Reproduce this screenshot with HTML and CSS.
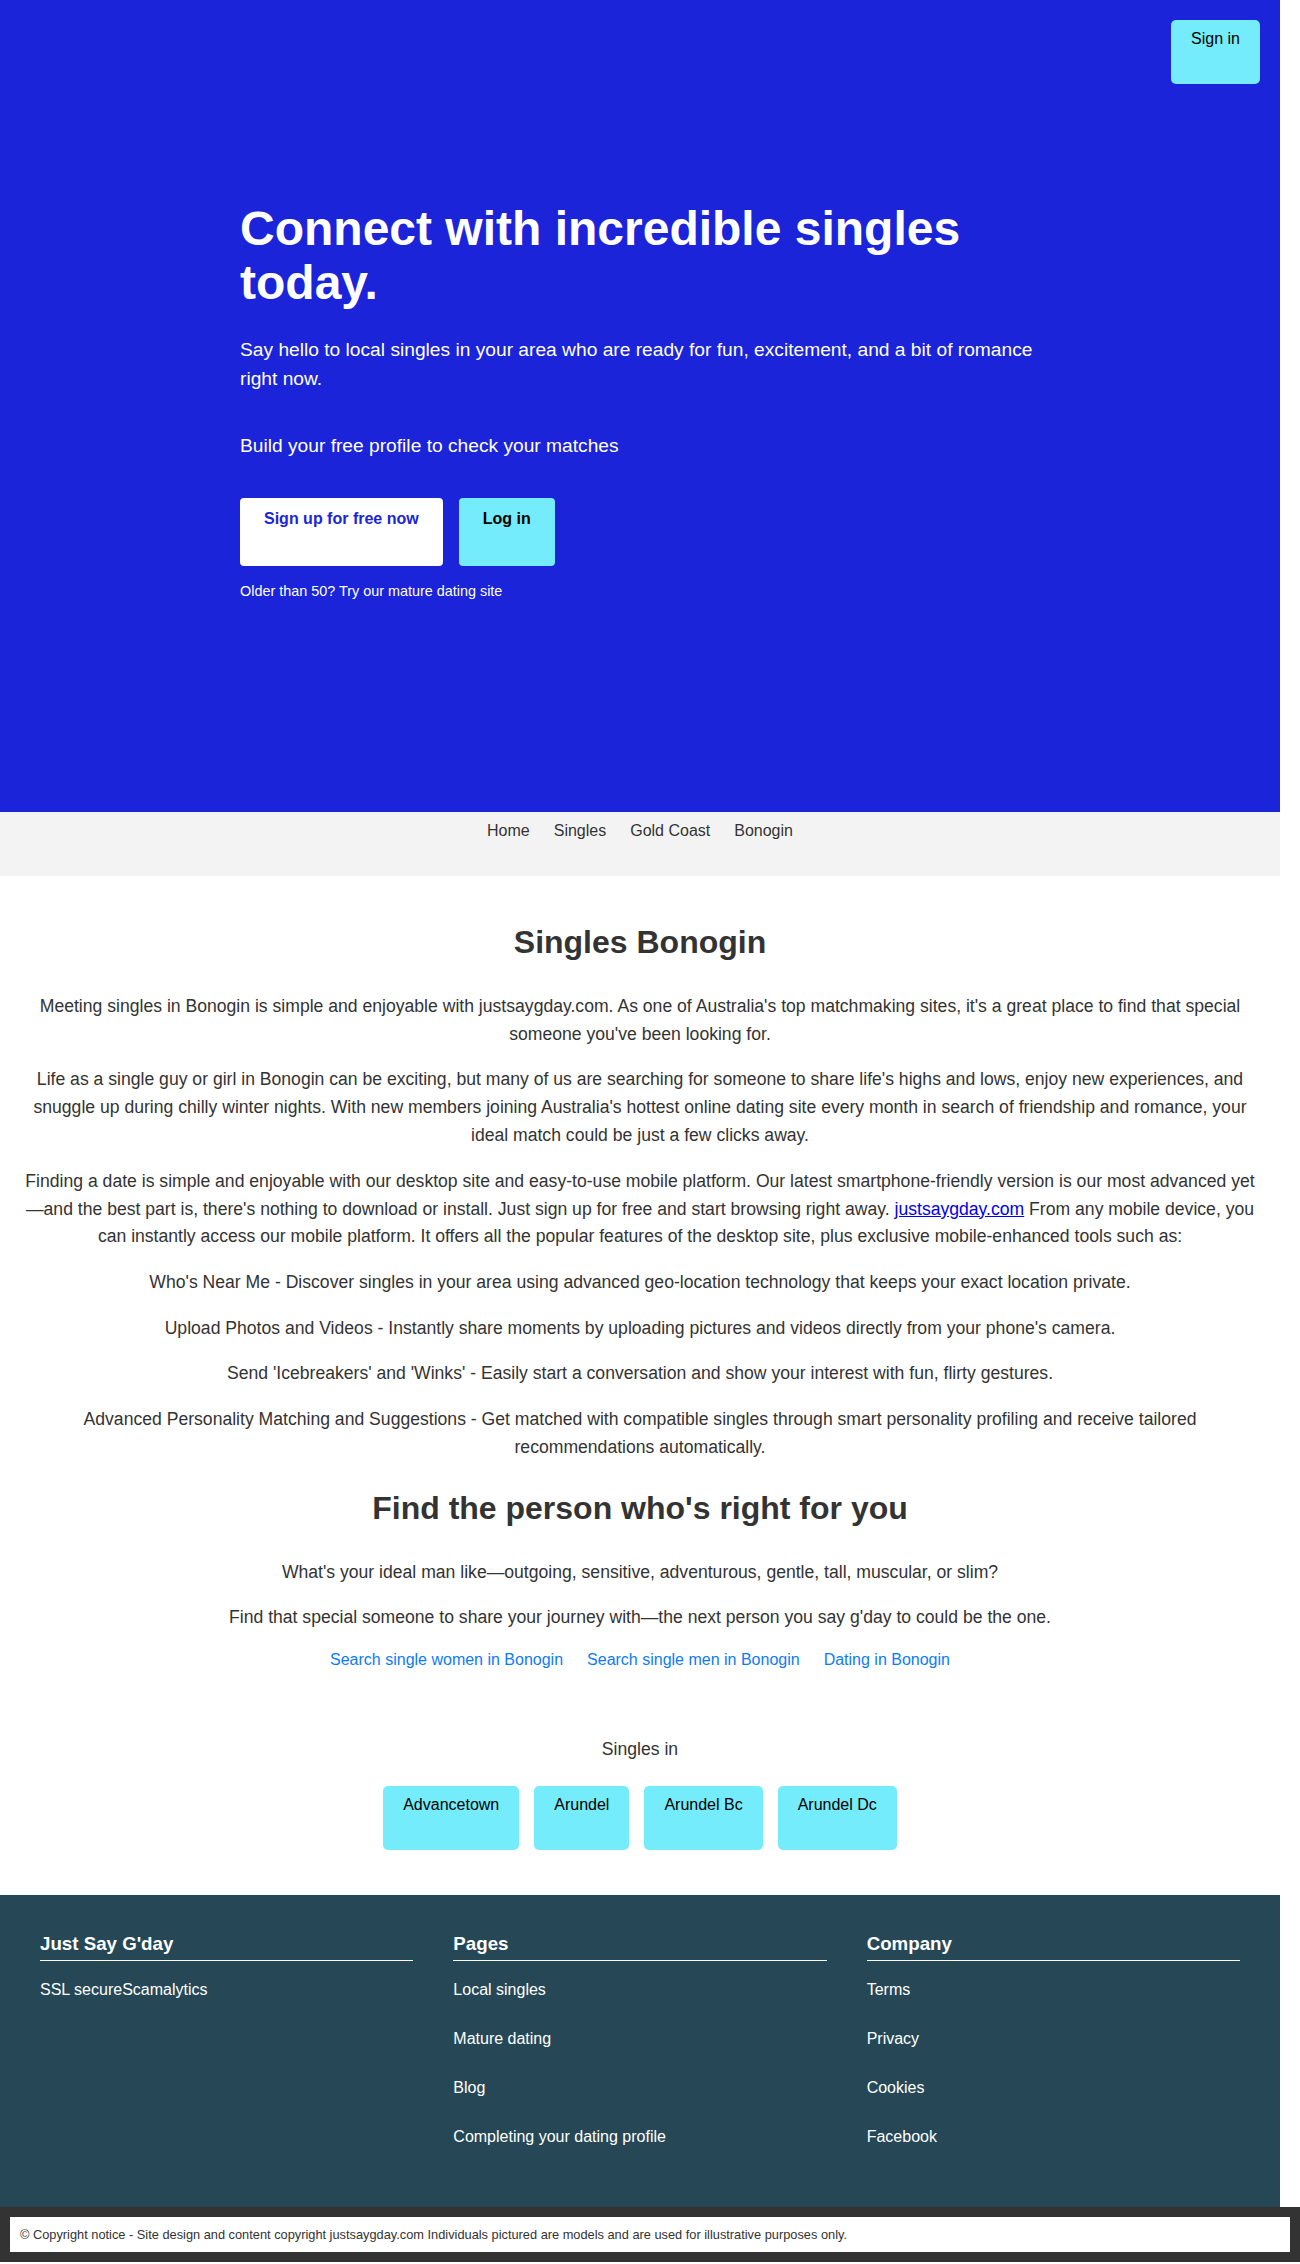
FILE: index.html
```html
<!DOCTYPE html>
<html lang="en">
<head>
<meta charset="utf-8">
<title>Singles Bonogin - Just Say G'day</title>
<link rel="stylesheet" href="styles.css">
</head>
<body>
<div class="page">
  <header class="hero">
    <div class="hero-top">
      <a class="btn btn-cyan btn-sm" href="#">Sign in</a>
    </div>
    <div class="hero-content">
      <h1 class="hero-title">Connect with incredible singles today.</h1>
      <p class="hero-lead">Say hello to local singles in your area who are ready for fun, excitement, and a bit of romance right now.</p>
      <p class="hero-cta">Build your free profile to check your matches</p>
      <div class="hero-buttons">
        <a class="btn btn-white btn-lg" href="#">Sign up for free now</a>
        <a class="btn btn-cyan btn-lg" href="#">Log in</a>
      </div>
      <p class="hero-note">Older than 50? Try our mature dating site</p>
    </div>
  </header>

  <nav class="crumbs">
    <a href="#">Home</a>
    <a href="#">Singles</a>
    <a href="#">Gold Coast</a>
    <a href="#">Bonogin</a>
  </nav>

  <main class="content">
    <h2 class="section-title">Singles Bonogin</h2>
    <p>Meeting singles in Bonogin is simple and enjoyable with justsaygday.com. As one of Australia's top matchmaking sites, it's a great place to find that special someone you've been looking for.</p>
    <p>Life as a single guy or girl in Bonogin can be exciting, but many of us are searching for someone to share life's highs and lows, enjoy new experiences, and snuggle up during chilly winter nights. With new members joining Australia's hottest online dating site every month in search of friendship and romance, your ideal match could be just a few clicks away.</p>
    <p>Finding a date is simple and enjoyable with our desktop site and easy-to-use mobile platform. Our latest smartphone-friendly version is our most advanced yet—and the best part is, there's nothing to download or install. Just sign up for free and start browsing right away. <a class="inline-link" href="#">justsaygday.com</a> From any mobile device, you can instantly access our mobile platform. It offers all the popular features of the desktop site, plus exclusive mobile-enhanced tools such as:</p>
    <p>Who's Near Me - Discover singles in your area using advanced geo-location technology that keeps your exact location private.</p>
    <p>Upload Photos and Videos - Instantly share moments by uploading pictures and videos directly from your phone's camera.</p>
    <p>Send 'Icebreakers' and 'Winks' - Easily start a conversation and show your interest with fun, flirty gestures.</p>
    <p>Advanced Personality Matching and Suggestions - Get matched with compatible singles through smart personality profiling and receive tailored recommendations automatically.</p>

    <h2 class="section-title section-title-2">Find the person who's right for you</h2>
    <p>What's your ideal man like—outgoing, sensitive, adventurous, gentle, tall, muscular, or slim?</p>
    <p>Find that special someone to share your journey with—the next person you say g'day to could be the one.</p>
    <div class="search-links">
      <a href="#">Search single women in Bonogin</a>
      <a href="#">Search single men in Bonogin</a>
      <a href="#">Dating in Bonogin</a>
    </div>
  </main>

  <section class="nearby">
    <p class="nearby-title">Singles in</p>
    <div class="tiles">
      <a class="btn btn-cyan btn-sm" href="#">Advancetown</a>
      <a class="btn btn-cyan btn-sm" href="#">Arundel</a>
      <a class="btn btn-cyan btn-sm" href="#">Arundel Bc</a>
      <a class="btn btn-cyan btn-sm" href="#">Arundel Dc</a>
    </div>
  </section>

  <footer class="site-footer">
    <div class="footer-col">
      <h3 class="footer-heading">Just Say G'day</h3>
      <ul class="footer-list">
        <li><span>SSL secure</span><span>Scamalytics</span></li>
      </ul>
    </div>
    <div class="footer-col">
      <h3 class="footer-heading">Pages</h3>
      <ul class="footer-list">
        <li><a href="#">Local singles</a></li>
        <li><a href="#">Mature dating</a></li>
        <li><a href="#">Blog</a></li>
        <li><a href="#">Completing your dating profile</a></li>
      </ul>
    </div>
    <div class="footer-col">
      <h3 class="footer-heading">Company</h3>
      <ul class="footer-list">
        <li><a href="#">Terms</a></li>
        <li><a href="#">Privacy</a></li>
        <li><a href="#">Cookies</a></li>
        <li><a href="#">Facebook</a></li>
      </ul>
    </div>
  </footer>
</div>
<div class="copyright">
  <div class="copyright-box">© Copyright notice - Site design and content copyright justsaygday.com Individuals pictured are models and are used for illustrative purposes only.</div>
</div>
</body>
</html>
```

FILE: styles.css
```css
* { box-sizing: border-box; }

html, body {
  margin: 0;
  padding: 0;
  background: #ffffff;
}

body {
  font-family: "Liberation Sans", Arial, Helvetica, sans-serif;
  color: #333333;
}

a { text-decoration: none; }

.page {
  width: 1280px;
}

/* ---------- Hero ---------- */
.hero {
  background: #1b24d9;
  height: 812px;
  color: #ffffff;
}

.hero-top {
  display: flex;
  justify-content: flex-end;
  padding: 20px 20px 0;
}

.btn {
  display: block;
  border-radius: 5px;
  color: #000000;
  font-size: 16px;
  line-height: 18px;
  text-align: center;
}

.btn-cyan { background: #74ecfb; }
.btn-white { background: #ffffff; color: #1b24d9; }

.btn-sm {
  height: 64px;
  padding: 10px 20px 0;
}

.btn-lg {
  height: 68px;
  padding: 12px 24px 0;
  font-weight: bold;
  border-radius: 4px;
}

.hero-content {
  width: 800px;
  margin: 0 auto;
  padding-top: 118px;
}

.hero-title {
  margin: 0;
  font-size: 48px;
  line-height: 54px;
  font-weight: bold;
}

.hero-lead {
  margin: 25px 0 0;
  font-size: 19.2px;
  line-height: 29.4px;
}

.hero-cta {
  margin: 37px 0 0;
  font-size: 19.2px;
  line-height: 29.4px;
}

.hero-buttons {
  display: flex;
  gap: 16px;
  margin-top: 38px;
}

.hero-note {
  margin: 17px 0 0;
  font-size: 14.4px;
  line-height: 16px;
}

/* ---------- Breadcrumb nav ---------- */
.crumbs {
  background: #f3f3f3;
  height: 64px;
  padding-top: 10px;
  display: flex;
  justify-content: center;
  gap: 24px;
  font-size: 16px;
  line-height: 18px;
}

.crumbs a { color: #333333; }

/* ---------- Main content ---------- */
.content {
  padding: 47px 20px 0;
  text-align: center;
}

.section-title {
  margin: 0 0 32px;
  font-size: 32px;
  line-height: 38px;
  font-weight: bold;
  color: #333333;
}

.section-title-2 { margin-top: 27px; }

.content p {
  margin: 0 0 17.9px;
  font-size: 17.6px;
  line-height: 27.8px;
  color: #333333;
}

.inline-link {
  color: #0000ee;
  text-decoration: underline;
}

.search-links {
  display: flex;
  justify-content: center;
  gap: 24px;
  padding-top: 1px;
  font-size: 16px;
  line-height: 18px;
}

.search-links a { color: #0d7bf7; }

/* ---------- Singles in ---------- */
.nearby {
  padding-top: 67px;
  padding-bottom: 45px;
  text-align: center;
}

.nearby-title {
  margin: 0;
  font-size: 17.6px;
  line-height: 27.8px;
}

.tiles {
  display: flex;
  justify-content: center;
  gap: 15px;
  margin-top: 22px;
}

/* ---------- Footer ---------- */
.site-footer {
  background: #264856;
  color: #ffffff;
  padding: 38px 40px 61px;
  display: grid;
  grid-template-columns: repeat(3, 1fr);
  gap: 40px;
}

.footer-heading {
  margin: 0;
  font-size: 18.72px;
  line-height: 21.5px;
  padding-bottom: 6px;
  border-bottom: 1px solid #ffffff;
}

.footer-list {
  list-style: none;
  margin: 19px 0 0;
  padding: 0;
  font-size: 16px;
  line-height: 19px;
}

.footer-list li { margin-bottom: 30px; }
.footer-list li:last-child { margin-bottom: 0; }
.footer-list a { color: #ffffff; }

/* ---------- Copyright ---------- */
.copyright {
  background: #333333;
  padding: 10px;
}

.copyright-box {
  background: #ffffff;
  height: 35px;
  padding: 10px 10px 0;
  font-size: 12.8px;
  line-height: 15px;
  color: #333333;
}
```
